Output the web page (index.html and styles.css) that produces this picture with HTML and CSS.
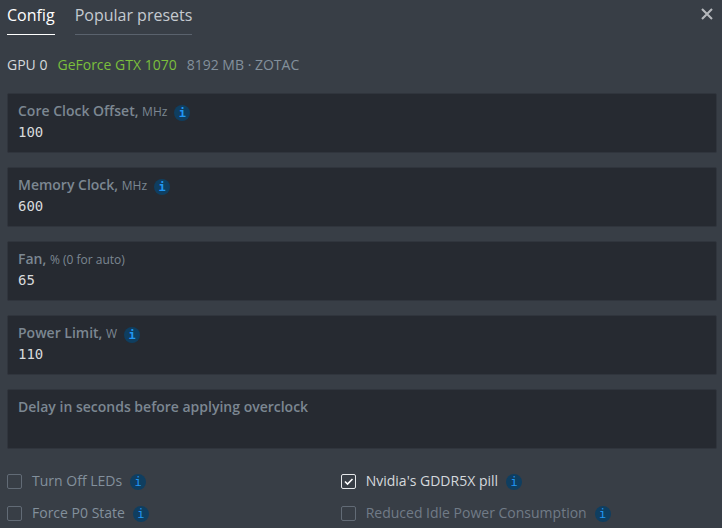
FILE: index.html
```html
<!DOCTYPE html>
<html lang="en">

<head>
    <meta charset="UTF-8">
    <meta name="viewport" content="width=device-width, initial-scale=1.0">
    <title>Overclocking</title>
    <link rel="stylesheet" href="styles.css">
</head>

<body>
    <form class="content">
        <div class="top">
            <div class="tabs">
                <button class="tab active" type="button">Config</button>
                <button class="tab" type="button">Popular presets</button>
            </div>
            <button class="close" type="button" aria-label="Close">
                <svg width="12" height="12" viewBox="0 0 12 12">
                    <path d="M1 1L11 11M11 1L1 11" fill="none" stroke="currentColor" stroke-width="2.1"/>
                </svg>
            </button>
        </div>

        <div class="gpu">
            <span class="gpu_num">GPU 0</span>
            <span class="gpu_name">GeForce GTX 1070</span>
            <span class="gpu_mem">8192 MB · ZOTAC</span>
        </div>

        <div class="fields">
            <div class="field">
                <div class="head">
                    <label for="core">Core Clock Offset, <small>MHz</small></label>
                    <span class="info">i</span>
                </div>
                <input class="inp" id="core" type="text" value="100">
            </div>
            <div class="field">
                <div class="head">
                    <label for="mem">Memory Clock, <small>MHz</small></label>
                    <span class="info">i</span>
                </div>
                <input class="inp" id="mem" type="text" value="600">
            </div>
            <div class="field">
                <div class="head">
                    <label for="fan">Fan, <small>% (0 for auto)</small></label>
                </div>
                <input class="inp" id="fan" type="text" value="65">
            </div>
            <div class="field">
                <div class="head">
                    <label for="power">Power Limit, <small>W</small></label>
                    <span class="info">i</span>
                </div>
                <input class="inp" id="power" type="text" value="110">
            </div>
            <div class="field">
                <div class="head">
                    <label for="delay">Delay in seconds before applying overclock</label>
                </div>
                <input class="inp" id="delay" type="text">
            </div>
        </div>

        <div class="checks">
            <div class="check">
                <input class="box" id="leds" type="checkbox">
                <label for="leds">Turn Off LEDs</label>
                <span class="info thin">i</span>
            </div>
            <div class="check">
                <input class="box" id="pill" type="checkbox" checked>
                <label for="pill">Nvidia's GDDR5X pill</label>
                <span class="info thin">i</span>
            </div>
            <div class="check">
                <input class="box" id="p0" type="checkbox">
                <label for="p0">Force P0 State</label>
                <span class="info thin">i</span>
            </div>
            <div class="check disabled">
                <input class="box" id="idle" type="checkbox" disabled>
                <label for="idle">Reduced Idle Power Consumption</label>
                <span class="info thin">i</span>
            </div>
        </div>
    </form>
</body>

</html>
```

FILE: styles.css
```css
* {
    margin: 0;
    padding: 0;
    box-sizing: border-box;
}

body {
    background: #383e46;
    color: #83909c;
    font-family: "Open Sans", "Noto Sans", sans-serif;
    font-size: 14px;
    line-height: 20px;
}

button {
    border: none;
    background: none;
    font-family: inherit;
    cursor: pointer;
}

.content {
    padding: 0 5px 4px 7px;
}

.top {
    display: flex;
    justify-content: space-between;
    align-items: flex-start;
}

.tabs {
    display: flex;
    gap: 20px;
}

.tab {
    padding: 3px 0 7px;
    border-bottom: 1px solid #5a626d;
    color: #c5cad0;
    font-size: 16px;
    line-height: 24px;
}

.tab.active {
    border-bottom-color: #fff;
    color: #fff;
}

.close {
    display: flex;
    padding: 8px 4px;
    color: #b5b8bc;
}

.gpu {
    display: flex;
    gap: 10px;
    margin: 20px 0 18px;
}

.gpu_num {
    color: #d5d9dd;
}

.gpu_name {
    color: #7bbf3c;
}

.fields {
    display: flex;
    flex-direction: column;
    gap: 14px;
}

.field {
    height: 60px;
    padding: 7px 10px;
    border: 1px solid #30353d;
    border-radius: 2px;
    background: #262a31;
}

.head {
    display: flex;
    align-items: center;
    gap: 7px;
    color: #7c8792;
    font-weight: 600;
}

.head small {
    font-size: 12px;
    font-weight: 400;
}

.inp {
    display: block;
    width: 100%;
    height: 20px;
    border: none;
    outline: none;
    background: none;
    color: #d8dadc;
    font-family: "DejaVu Sans Mono", monospace;
    font-size: 14px;
}

.info {
    width: 16px;
    height: 16px;
    margin-top: 2px;
    border-radius: 50%;
    background: #0f3e60;
    color: #2196f3;
    font-family: "DejaVu Sans Mono", monospace;
    font-size: 12px;
    font-weight: 700;
    line-height: 16px;
    text-align: center;
}

.info.thin {
    font-weight: 400;
}

.checks {
    display: grid;
    grid-template-columns: 47% 1fr;
    row-gap: 12px;
    margin-top: 22px;
}

.check {
    display: flex;
    align-items: center;
    gap: 8px;
}

.box {
    width: 15px;
    height: 15px;
    margin-right: 2px;
    appearance: none;
    border: 1px solid #626b76;
    border-radius: 2px;
}

.box:checked {
    border-color: #e6e8ea;
    background: url("data:image/svg+xml,%3Csvg xmlns='http://www.w3.org/2000/svg' viewBox='0 0 13 13'%3E%3Cpath d='M3 6.5L5.5 9L10.5 4' fill='none' stroke='white' stroke-width='1.6'/%3E%3C/svg%3E") center no-repeat;
}

.box:checked + label {
    color: #d5d9dd;
}

.disabled label {
    color: #717b87;
}
```
